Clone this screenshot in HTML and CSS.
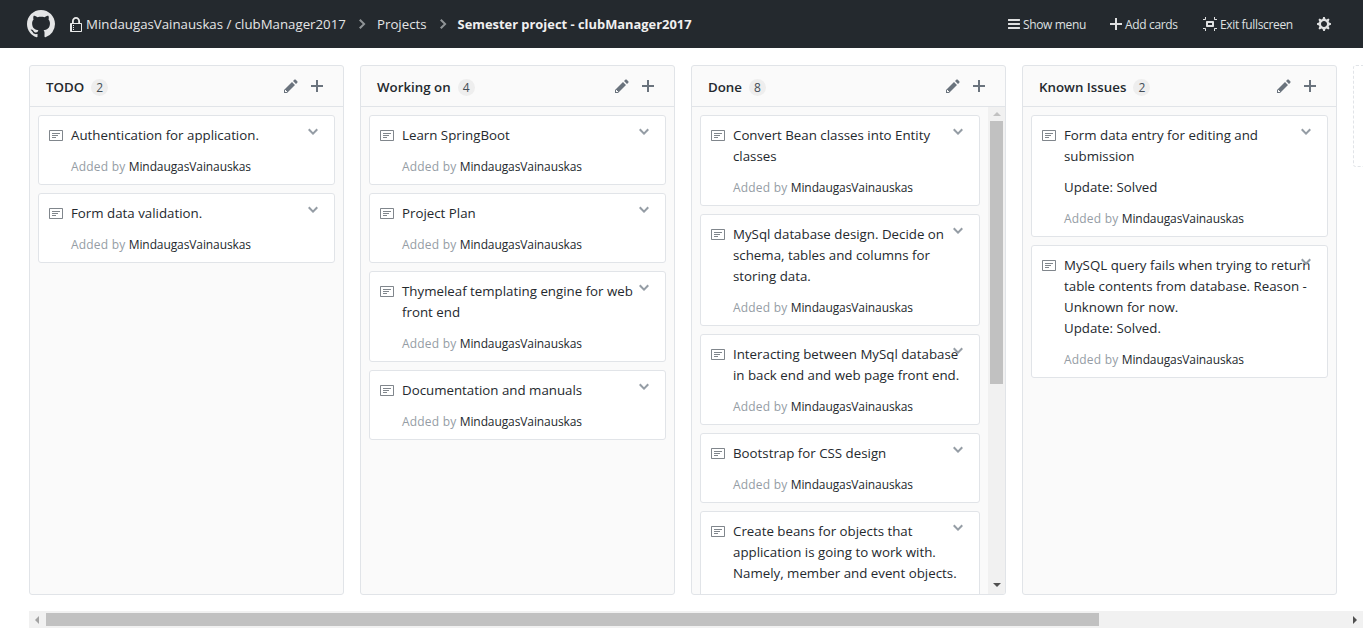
FILE: index.html
```html
<!DOCTYPE html>
<html lang="en">
<head>
<meta charset="utf-8">
<title>Semester project - clubManager2017</title>
<link rel="stylesheet" href="styles.css">
</head>
<body>
<svg class="defs" width="0" height="0" aria-hidden="true">
  <symbol id="i-mark" viewBox="0 0 16 16"><path d="M8 0C3.58 0 0 3.58 0 8c0 3.54 2.29 6.53 5.47 7.59.4.07.55-.17.55-.38 0-.19-.01-.82-.01-1.49-2.01.37-2.53-.49-2.69-.94-.09-.23-.48-.94-.82-1.13-.28-.15-.68-.52-.01-.53.63-.01 1.08.58 1.23.82.72 1.21 1.87.87 2.33.66.07-.52.28-.87.51-1.07-1.78-.2-3.64-.89-3.64-3.95 0-.87.31-1.59.82-2.15-.08-.2-.36-1.02.08-2.12 0 0 .67-.21 2.2.82.64-.18 1.32-.27 2-.27.68 0 1.36.09 2 .27 1.53-1.04 2.2-.82 2.2-.82.44 1.1.16 1.92.08 2.12.51.56.82 1.27.82 2.15 0 3.07-1.87 3.75-3.65 3.95.29.25.54.73.54 1.48 0 1.07-.01 1.93-.01 2.2 0 .21.15.46.55.38A8.013 8.013 0 0 0 16 8c0-4.42-3.58-8-8-8z"/></symbol>
  <symbol id="i-lock" viewBox="0 0 12 16"><path d="M4 13H3v-1h1v1zm8-6v7c0 .55-.45 1-1 1H1c-.55 0-1-.45-1-1V7c0-.55.45-1 1-1h1V4c0-2.2 1.8-4 4-4s4 1.8 4 4v2h1c.55 0 1 .45 1 1zM3.8 6h4.41V4c0-1.22-.98-2.2-2.2-2.2-1.22 0-2.2.98-2.2 2.2v2H3.8zM11 7H2v7h9V7zM4 8H3v1h1V8zm0 2H3v1h1v-1z"/></symbol>
  <symbol id="i-bars" viewBox="0 0 12 16"><path d="M11.41 9H.59C0 9 0 8.59 0 8c0-.59 0-1 .59-1H11.4c.59 0 .59.41.59 1 0 .59 0 1-.59 1h.01zm0-4H.59C0 5 0 4.59 0 4c0-.59 0-1 .59-1H11.4c.59 0 .59.41.59 1 0 .59 0 1-.59 1h.01zM.59 11H11.4c.59 0 .59.41.59 1 0 .59 0 1-.59 1H.59C0 13 0 12.59 0 12c0-.59 0-1 .59-1z"/></symbol>
  <symbol id="i-plus" viewBox="0 0 12 16"><path d="M12 9H7v5H5V9H0V7h5V2h2v5h5v2z"/></symbol>
  <symbol id="i-screen" viewBox="0 0 14 16"><path d="M2 4H0V3h2V1h1v2c0 .547-.453 1-1 1zm0 8H0v1h2v2h1v-2c0-.547-.453-1-1-1zm9-2c0 .547-.453 1-1 1H4c-.547 0-1-.453-1-1V6c0-.547.453-1 1-1h6c.547 0 1 .453 1 1v4zM9 7H5v2h4V7zm2 6v2h1v-2h2v-1h-2c-.547 0-1 .453-1 1zm1-9h2V3h-2V1h-1v2c0 .547.453 1 1 1z"/></symbol>
  <symbol id="i-gear" viewBox="0 0 14 16"><path d="M14 8.77v-1.6l-1.94-.64-.45-1.09.88-1.84-1.13-1.13-1.81.91-1.09-.45-.69-1.92h-1.6l-.63 1.94-1.11.45-1.84-.88-1.13 1.13.91 1.81-.45 1.09L0 7.23v1.59l1.94.64.45 1.09-.88 1.84 1.13 1.13 1.81-.91 1.09.45.69 1.92h1.59l.63-1.94 1.11-.45 1.84.88 1.13-1.13-.92-1.81.47-1.09L14 8.75v.02zM7 11c-1.66 0-3-1.34-3-3s1.34-3 3-3 3 1.34 3 3-1.34 3-3 3z"/></symbol>
  <symbol id="i-pencil" viewBox="0 0 14 16"><path d="M0 12v3h3l8-8-3-3-8 8zm3 2H1v-2h1v1h1v1zm10.3-9.3L12 6 9 3l1.3-1.3a.996.996 0 0 1 1.41 0l1.59 1.59c.39.39.39 1.02 0 1.41z"/></symbol>
  <symbol id="i-note" viewBox="0 0 14 16"><path d="M3 10h4V9H3v1zm0-2h6V7H3v1zm0-2h8V5H3v1zm10 6H1V3h12v9zM1 2c-.55 0-1 .45-1 1v9c0 .55.45 1 1 1h12c.55 0 1-.45 1-1V3c0-.55-.45-1-1-1H1z"/></symbol>
  <symbol id="i-chev" viewBox="0 0 10 16"><path d="M5 11L0 6l1.5-1.5L5 8.25 8.5 4.5 10 6l-5 5z"/></symbol>
  <symbol id="i-crumb" viewBox="0 0 8 16"><path d="M7.5 8l-5 5L1 11.5 4.75 8 1 4.5 2.5 3l5 5z"/></symbol>
</svg>

<header class="topbar">
  <svg class="logo"><use href="#i-mark"/></svg>
  <svg class="lock"><use href="#i-lock"/></svg>
  <a class="crumb repo">MindaugasVainauskas / clubManager2017</a>
  <svg class="sep"><use href="#i-crumb"/></svg>
  <a class="crumb">Projects</a>
  <svg class="sep"><use href="#i-crumb"/></svg>
  <strong class="crumb current">Semester project - clubManager2017</strong>
  <nav class="actions">
    <a class="action act-menu"><svg class="ai ai-12"><use href="#i-bars"/></svg>Show menu</a>
    <a class="action act-add"><svg class="ai ai-12"><use href="#i-plus"/></svg>Add cards</a>
    <a class="action act-exit"><svg class="ai ai-14"><use href="#i-screen"/></svg>Exit fullscreen</a>
    <svg class="ai ai-14 gear"><use href="#i-gear"/></svg>
  </nav>
</header>

<main class="board">
  <section class="column">
    <div class="col-head"><h3 class="col-title">TODO</h3><span class="count">2</span>
      <svg class="hi pencil"><use href="#i-pencil"/></svg><svg class="hi plus"><use href="#i-plus"/></svg></div>
    <div class="col-body"><div class="cards">
      <article class="card"><svg class="note"><use href="#i-note"/></svg><svg class="chev"><use href="#i-chev"/></svg>
        <p class="text">Authentication for application.</p><p class="meta">Added by <a>MindaugasVainauskas</a></p></article>
      <article class="card"><svg class="note"><use href="#i-note"/></svg><svg class="chev"><use href="#i-chev"/></svg>
        <p class="text">Form data validation.</p><p class="meta">Added by <a>MindaugasVainauskas</a></p></article>
    </div></div>
  </section>

  <section class="column">
    <div class="col-head"><h3 class="col-title">Working on</h3><span class="count">4</span>
      <svg class="hi pencil"><use href="#i-pencil"/></svg><svg class="hi plus"><use href="#i-plus"/></svg></div>
    <div class="col-body"><div class="cards">
      <article class="card"><svg class="note"><use href="#i-note"/></svg><svg class="chev"><use href="#i-chev"/></svg>
        <p class="text">Learn SpringBoot</p><p class="meta">Added by <a>MindaugasVainauskas</a></p></article>
      <article class="card"><svg class="note"><use href="#i-note"/></svg><svg class="chev"><use href="#i-chev"/></svg>
        <p class="text">Project Plan</p><p class="meta">Added by <a>MindaugasVainauskas</a></p></article>
      <article class="card"><svg class="note"><use href="#i-note"/></svg><svg class="chev"><use href="#i-chev"/></svg>
        <p class="text">Thymeleaf templating engine for web<br>front end</p><p class="meta">Added by <a>MindaugasVainauskas</a></p></article>
      <article class="card"><svg class="note"><use href="#i-note"/></svg><svg class="chev"><use href="#i-chev"/></svg>
        <p class="text">Documentation and manuals</p><p class="meta">Added by <a>MindaugasVainauskas</a></p></article>
    </div></div>
  </section>

  <section class="column">
    <div class="col-head"><h3 class="col-title">Done</h3><span class="count">8</span>
      <svg class="hi pencil"><use href="#i-pencil"/></svg><svg class="hi plus"><use href="#i-plus"/></svg></div>
    <div class="col-body"><div class="cards">
      <article class="card"><svg class="note"><use href="#i-note"/></svg><svg class="chev"><use href="#i-chev"/></svg>
        <p class="text">Convert Bean classes into Entity<br>classes</p><p class="meta">Added by <a>MindaugasVainauskas</a></p></article>
      <article class="card"><svg class="note"><use href="#i-note"/></svg><svg class="chev"><use href="#i-chev"/></svg>
        <p class="text">MySql database design. Decide on<br>schema, tables and columns for<br>storing data.</p><p class="meta">Added by <a>MindaugasVainauskas</a></p></article>
      <article class="card"><svg class="note"><use href="#i-note"/></svg><svg class="chev"><use href="#i-chev"/></svg>
        <p class="text">Interacting between MySql database<br>in back end and web page front end.</p><p class="meta">Added by <a>MindaugasVainauskas</a></p></article>
      <article class="card"><svg class="note"><use href="#i-note"/></svg><svg class="chev"><use href="#i-chev"/></svg>
        <p class="text">Bootstrap for CSS design</p><p class="meta">Added by <a>MindaugasVainauskas</a></p></article>
      <article class="card"><svg class="note"><use href="#i-note"/></svg><svg class="chev"><use href="#i-chev"/></svg>
        <p class="text">Create beans for objects that<br>application is going to work with.<br>Namely, member and event objects.</p><p class="meta">Added by <a>MindaugasVainauskas</a></p></article>
    </div>
    <div class="vscroll"><span class="arrow up"></span><span class="vthumb"></span><span class="arrow down"></span></div>
    </div>
  </section>

  <section class="column">
    <div class="col-head"><h3 class="col-title">Known Issues</h3><span class="count">2</span>
      <svg class="hi pencil"><use href="#i-pencil"/></svg><svg class="hi plus"><use href="#i-plus"/></svg></div>
    <div class="col-body"><div class="cards">
      <article class="card"><svg class="note"><use href="#i-note"/></svg><svg class="chev"><use href="#i-chev"/></svg>
        <p class="text">Form data entry for editing and<br>submission</p><p class="text">Update: Solved</p><p class="meta">Added by <a>MindaugasVainauskas</a></p></article>
      <article class="card"><svg class="note"><use href="#i-note"/></svg><svg class="chev"><use href="#i-chev"/></svg>
        <p class="text">MySQL query fails when trying to return<br>table contents from database. Reason -<br>Unknown for now.<br>Update: Solved.</p><p class="meta">Added by <a>MindaugasVainauskas</a></p></article>
    </div></div>
  </section>

  <div class="placeholder"></div>
</main>

<div class="hscroll"><span class="arrow left"></span><span class="hthumb"></span><span class="arrow right"></span></div>
</body>
</html>
```

FILE: styles.css
```css
* { box-sizing: border-box; }
html, body { margin: 0; height: 100%; overflow: hidden; background: #fff; }
body {
  font-family: "Open Sans", "Noto Sans", "Liberation Sans", sans-serif;
  font-size: 13.3px;
  color: #24292e;
}
.defs { position: absolute; }

.topbar {
  display: flex;
  align-items: center;
  height: 48px;
  padding-left: 27px;
  background: #24292e;
  color: #fff;
}
.topbar svg { fill: currentColor; flex: none; }
.logo { width: 28px; height: 28px; margin-right: 15px; color: #e4e5e6; }
.lock { width: 12px; height: 16px; margin-right: 4px; margin-top: 2px; color: #e9eaea; }
.crumb { font-size: 13.25px; color: #e4e5e6; white-space: nowrap; }
.repo { width: 260px; }
.sep { width: 8px; height: 16px; margin: 0 11px 0 12px; color: #8f9396; }
.current { font-size: 12.9px; font-weight: 700; color: #f0f0f0; }

.actions { display: flex; align-items: center; margin-left: auto; }
.action { display: flex; align-items: center; font-size: 12px; letter-spacing: -0.35px; color: #dfe0e1; white-space: nowrap; }
.ai { height: 16px; margin-right: 3px; }
.ai-12 { width: 12px; }
.ai-14 { width: 14px; }
.act-menu { width: 102px; }
.act-add { width: 93px; }
.act-exit { width: 114px; }
.gear { margin: 0 32px 0 0; color: #dfe0e1; }

.board {
  display: flex;
  gap: 16px;
  height: 530px;
  margin-top: 17px;
  padding-left: 29px;
  overflow: hidden;
}
.column {
  flex: none;
  display: flex;
  flex-direction: column;
  width: 315px;
  background: #fafafa;
  border: 1px solid #e1e4e8;
  border-radius: 3px;
  overflow: hidden;
}
.col-head {
  flex: none;
  display: flex;
  align-items: center;
  height: 41px;
  padding: 0 20px 0 16px;
  border-bottom: 1px solid #e1e4e8;
}
.col-title { margin: 2px 0 0; font-size: 13.3px; font-weight: 600; }
.count {
  min-width: 17px;
  margin: 2px 0 0 7px;
  padding: 0 3px;
  border-radius: 9px;
  background: #eeeeee;
  font-size: 12px;
  line-height: 17px;
  text-align: center;
  color: #444d56;
}
.hi { height: 16px; fill: #6a737d; flex: none; }
.pencil { width: 14px; margin-left: auto; }
.plus { width: 12px; margin-left: 13px; }

.col-body { flex: 1; display: flex; min-height: 0; }
.cards {
  flex: 1;
  min-width: 0;
  display: flex;
  flex-direction: column;
  gap: 8px;
  padding: 8px 8px 0;
  overflow: hidden;
}
.card {
  position: relative;
  flex: none;
  padding: 9px 8px 7px 32px;
  background: #fff;
  border: 1px solid #e1e4e8;
  border-radius: 3px;
}
.note {
  position: absolute;
  left: 10px;
  top: 12px;
  width: 14px;
  height: 16px;
  fill: #80868c;
}
.chev {
  position: absolute;
  right: 16px;
  top: 8px;
  width: 10px;
  height: 16px;
  fill: #959da5;
}
.text { margin: 0 0 10px; line-height: 21px; white-space: nowrap; }
.meta { margin: 0; font-size: 12px; letter-spacing: 0.2px; line-height: 21px; color: #959da5; white-space: nowrap; }
.meta a { letter-spacing: -0.1px; color: #24292e; }

.vscroll {
  flex: none;
  display: flex;
  flex-direction: column;
  align-items: center;
  width: 17px;
  background: #f1f1f1;
}
.vthumb { width: 13px; height: 263px; margin-top: 5px; background: #c1c1c1; }
.arrow { display: block; flex: none; width: 0; height: 0; border-style: solid; border-color: transparent; }
.up { margin-top: 5px; border-width: 0 4px 4px; border-bottom-color: #c1c1c1; }
.down { margin-top: auto; margin-bottom: 7px; border-width: 4px 4px 0; border-top-color: #505050; }

.placeholder {
  flex: none;
  width: 100px;
  height: 102px;
  border: 1px dashed #e1e4e8;
  border-radius: 3px;
}

.hscroll {
  display: flex;
  align-items: center;
  height: 17px;
  margin: 16px 0 0 29px;
  background: #f1f1f1;
}
.hthumb { width: 1053px; height: 13px; margin-left: 7px; background: #c1c1c1; }
.left { margin-left: 6px; border-width: 4px 4px 4px 0; border-right-color: #a3a3a3; }
.right { margin-left: auto; margin-right: 6px; border-width: 4px 0 4px 4px; border-left-color: #505050; }
```
